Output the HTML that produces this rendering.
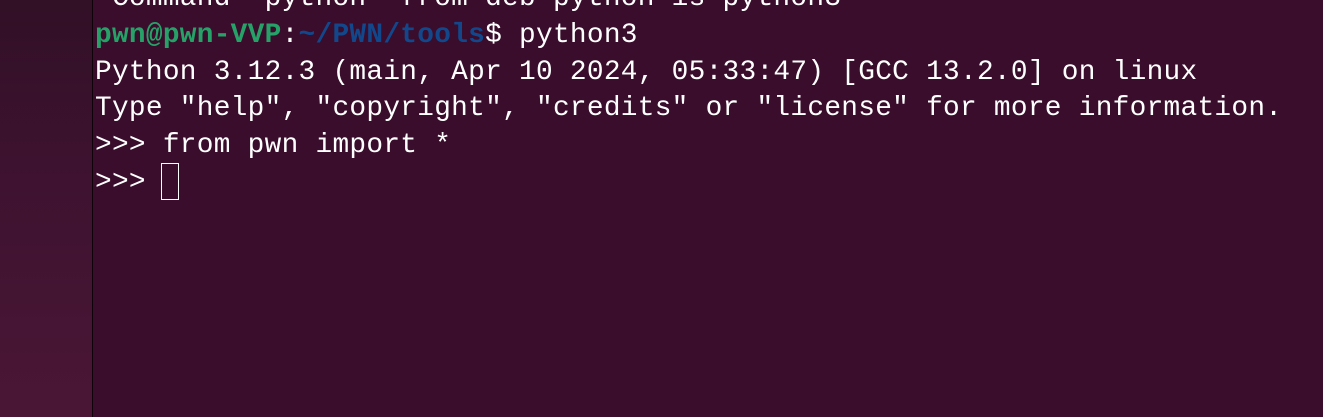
<!DOCTYPE html>
<html><head><style>
html,body{margin:0;padding:0;width:1323px;height:417px;overflow:hidden;background:#390d2b}
.side{position:absolute;left:0;top:0;width:92px;height:417px;background:linear-gradient(180deg,#321026 0%,#3d1230 40%,#4b1636 100%)}
.bar{position:absolute;left:92px;top:0;width:1px;height:417px;background:#0e0309}
.t{position:absolute;left:95px;top:-19px;font-family:"Liberation Mono","DejaVu Sans Mono",monospace;font-size:27.8px;letter-spacing:0.28px;line-height:36.8px;color:#fff;white-space:pre}
.g{color:#26a269;font-weight:bold}.b{color:#12488b;font-weight:bold}
.cur{position:absolute;left:161px;top:163px;width:18px;height:37px;border:1px solid #fff;box-sizing:border-box}
</style></head><body>
<div class="side"></div><div class="bar"></div>
<div class="t"> Command 'python' from deb python-is-python3
<span class="g">pwn@pwn-VVP</span>:<span class="b">~/PWN/tools</span>$ python3
Python 3.12.3 (main, Apr 10 2024, 05:33:47) [GCC 13.2.0] on linux
Type "help", "copyright", "credits" or "license" for more information.
&gt;&gt;&gt; from pwn import *
&gt;&gt;&gt; </div>
<div class="cur"></div>
</body></html>
